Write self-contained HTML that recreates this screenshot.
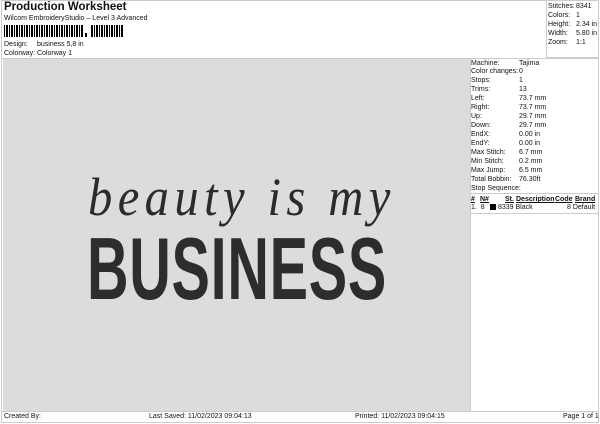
<!DOCTYPE html>
<html><head><style>
*{margin:0;padding:0;box-sizing:border-box}
body{width:600px;height:424px;background:#fff;font-family:"Liberation Sans",Arial,sans-serif;color:#111;position:relative;overflow:hidden;font-size:7px}
.a{position:absolute;white-space:nowrap}
.t{position:absolute;font-size:7px;line-height:9.1px}
</style></head><body>
<div class="a" style="left:1px;top:0;width:598px;height:423px;border:1px solid #ccc"></div>
<div class="a" style="left:4px;top:1px;font-size:11.5px;font-weight:bold">Production Worksheet</div>
<div class="a" style="left:4px;top:15px;font-size:7px">Wilcom EmbroideryStudio – Level 3 Advanced</div>
<div class="a" style="left:4px;top:25px;height:12px;width:120px;background:repeating-linear-gradient(90deg,#000 0 1px,#fff 1px 2px,#000 2px 4px,#fff 4px 5px)"></div>
<div class="a" style="left:84px;top:25px;height:12px;width:6px;background:#fff"></div>
<div class="a" style="left:85px;top:33px;width:2px;height:4px;background:#000"></div>
<div class="a" style="left:4px;top:41px;font-size:7px">Design:</div>
<div class="a" style="left:37px;top:41px;font-size:7px">business 5,8 in</div>
<div class="a" style="left:4px;top:50px;font-size:7px">Colorway:</div>
<div class="a" style="left:37px;top:50px;font-size:7px">Colorway 1</div>
<div class="a" style="left:546px;top:1px;width:52px;height:57px;border-left:1px solid #ccc;border-bottom:1px solid #ccc"></div>
<div class="t" style="left:548px;top:2px">Stitches:<br>Colors:<br>Height:<br>Width:<br>Zoom:</div>
<div class="t" style="left:576px;top:2px">8341<br>1<br>2.34 in<br>5.80 in<br>1:1</div>
<div class="a" style="left:1px;top:58px;width:598px;height:1px;background:#ccc"></div>
<div class="a" style="left:3px;top:59px;width:467px;height:352px;background:#dcdcdc"></div>
<div class="a" style="left:470px;top:59px;width:128px;height:352px;border-left:1px solid #ccc"></div>
<div class="t" style="left:471px;top:59.5px;line-height:8.95px">Machine:<br>Color changes:<br>Stops:<br>Trims:<br>Left:<br>Right:<br>Up:<br>Down:<br>EndX:<br>EndY:<br>Max Stitch:<br>Min Stitch:<br>Max Jump:<br>Total Bobbin:<br>Stop Sequence:</div>
<div class="t" style="left:519px;top:59.5px;line-height:8.95px">Tajima<br>0<br>1<br>13<br>73.7 mm<br>73.7 mm<br>29.7 mm<br>29.7 mm<br>0.00 in<br>0.00 in<br>6.7 mm<br>0.2 mm<br>6.5 mm<br>76.30ft</div>
<div class="a" style="left:470px;top:193px;width:128px;height:1px;background:#ccc"></div>
<div class="a" style="left:470px;top:213px;width:128px;height:1px;background:#ccc"></div>
<div class="t" style="left:471px;top:195px;font-weight:bold;text-decoration:underline">#</div>
<div class="t" style="left:480px;top:195px;font-weight:bold;text-decoration:underline">N#</div>
<div class="t" style="left:505px;top:195px;font-weight:bold;text-decoration:underline">St.</div>
<div class="t" style="left:516px;top:195px;font-weight:bold;text-decoration:underline">Description</div>
<div class="t" style="left:555px;top:195px;font-weight:bold;text-decoration:underline">Code</div>
<div class="t" style="left:575px;top:195px;font-weight:bold;text-decoration:underline">Brand</div>
<div class="t" style="left:471px;top:203px">1.&nbsp; 8</div>
<div class="a" style="left:490px;top:204px;width:6px;height:6px;background:#000"></div>
<div class="t" style="left:498px;top:203px">8339&nbsp;Black</div>
<div class="t" style="left:567px;top:203px">8&nbsp;Default</div>
<div class="a" style="left:1px;top:411px;width:598px;height:1px;background:#ccc"></div>
<div class="t" style="left:4px;top:412px">Created By:</div>
<div class="t" style="left:149px;top:412px">Last Saved: 11/02/2023 09:04:13</div>
<div class="t" style="left:355px;top:412px">Printed: 11/02/2023 09:04:15</div>
<div class="t" style="left:563px;top:412px">Page 1 of 1</div>
<div class="a" style="left:88px;top:166px;font-family:'Liberation Serif',serif;font-style:italic;font-size:54px;letter-spacing:6px;color:#2a2c2a;transform:scaleX(0.9);transform-origin:left">beauty is my</div>
<div class="a" style="left:87px;top:225px;font-family:'Liberation Sans',sans-serif;font-weight:bold;font-size:88px;line-height:88px;color:#2b2e2b;letter-spacing:1px;transform:scaleX(0.655);transform-origin:left">BUSINESS</div>
</body></html>
